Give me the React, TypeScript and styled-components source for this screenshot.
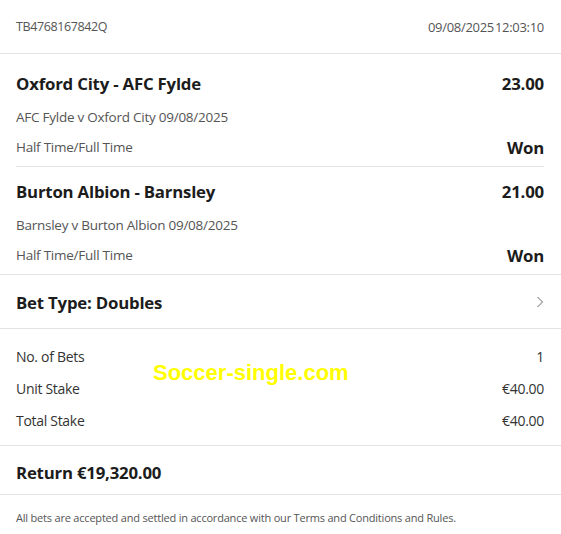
import React from 'react';
import styled, { createGlobalStyle } from 'styled-components';

const GlobalStyle = createGlobalStyle`
    html, body {
        margin: 0;
        padding: 0;
        background: #ffffff;
    }
    body {
        font-family: 'Open Sans', 'Noto Sans', sans-serif;
        color: #1c1c1c;
    }
`;

const Slip = styled.div`
    position: relative;
    width: 561px;
    background: #fff;
`;

const Header = styled.div`
    display: flex;
    justify-content: space-between;
    align-items: center;
    height: 53px;
    padding: 0 17px 0 16px;
    border-bottom: 1px solid #e3e3e3;
    font-size: 13px;
    color: #555;
    letter-spacing: -0.3px;
`;

const Ref = styled.span`
    font-size: 12.5px;
    letter-spacing: -0.4px;
`;

const Section = styled.div<{ top?: number; bottom?: number }>`
    padding: ${(props) => props.top ?? 0}px 0 ${(props) => props.bottom ?? 0}px;
    border-bottom: 1px solid #e3e3e3;
`;

const Leg = styled.div`
    margin: 0 17px 0 16px;
    padding: 10px 0 9px;
    & + & {
        border-top: 1px solid #e3e3e3;
    }
`;

const Row = styled.div<{ height?: number; gap?: number }>`
    display: flex;
    justify-content: space-between;
    align-items: center;
    height: ${(props) => props.height ?? 20}px;
    margin-top: ${(props) => props.gap ?? 0}px;
`;

const PaddedRow = styled(Row)`
    padding: 0 17px 0 16px;
`;

const Title = styled.span`
    font-size: 16.8px;
    font-weight: 700;
    letter-spacing: -0.2px;
    color: #1c1c1c;
`;

const Sub = styled.span`
    font-size: 13.5px;
    color: #555;
    letter-spacing: -0.25px;
`;

const Label = styled.span`
    font-size: 14px;
    color: #333;
    letter-spacing: -0.3px;
`;

const Footer = styled.div`
    padding: 15px 16px;
    font-size: 11px;
    color: #555;
    letter-spacing: -0.2px;
`;

const Watermark = styled.div`
    position: absolute;
    left: 153px;
    top: 360px;
    font-family: 'Liberation Sans', Arial, sans-serif;
    font-weight: 700;
    font-size: 22px;
    color: #ffff00;
    pointer-events: none;
`;

const Chevron = () => (
    <svg width="8" height="12" viewBox="0 0 8 12">
        <path d="M1.5 1 L6.5 6 L1.5 11" fill="none" stroke="#666" strokeWidth="1" />
    </svg>
);

const legs = [
    { title: 'Oxford City - AFC Fylde', odds: '23.00', event: 'AFC Fylde v Oxford City 09/08/2025' },
    { title: 'Burton Albion - Barnsley', odds: '21.00', event: 'Barnsley v Burton Albion 09/08/2025' },
];

const stakes = [
    ['No. of Bets', '1'],
    ['Unit Stake', '€40.00'],
    ['Total Stake', '€40.00'],
];

const App = () => (
    <Slip>
        <GlobalStyle />
        <Header>
            <Ref>TB4768167842Q</Ref>
            <span>
                09/08/2025<span style={{ marginLeft: 1 }}>12:03:10</span>
            </span>
        </Header>
        <Section top={5}>
            {legs.map((leg) => (
                <Leg key={leg.title}>
                    <Row height={28}>
                        <Title>{leg.title}</Title>
                        <Title>{leg.odds}</Title>
                    </Row>
                    <Row gap={10}>
                        <Sub>{leg.event}</Sub>
                    </Row>
                    <Row gap={10}>
                        <Sub>Half Time/Full Time</Sub>
                        <Title>Won</Title>
                    </Row>
                </Leg>
            ))}
        </Section>
        <Section top={13} bottom={12}>
            <PaddedRow height={28}>
                <Title>Bet Type: Doubles</Title>
                <Chevron />
            </PaddedRow>
        </Section>
        <Section top={11} bottom={9}>
            {stakes.map(([k, v]) => (
                <PaddedRow key={k} height={32}>
                    <Label>{k}</Label>
                    <Label>{v}</Label>
                </PaddedRow>
            ))}
        </Section>
        <Section top={12} bottom={8}>
            <PaddedRow height={28}>
                <Title>Return €19,320.00</Title>
            </PaddedRow>
        </Section>
        <Footer>All bets are accepted and settled in accordance with our Terms and Conditions and Rules.</Footer>
        <Watermark>Soccer-single.com</Watermark>
    </Slip>
);

export default App;
